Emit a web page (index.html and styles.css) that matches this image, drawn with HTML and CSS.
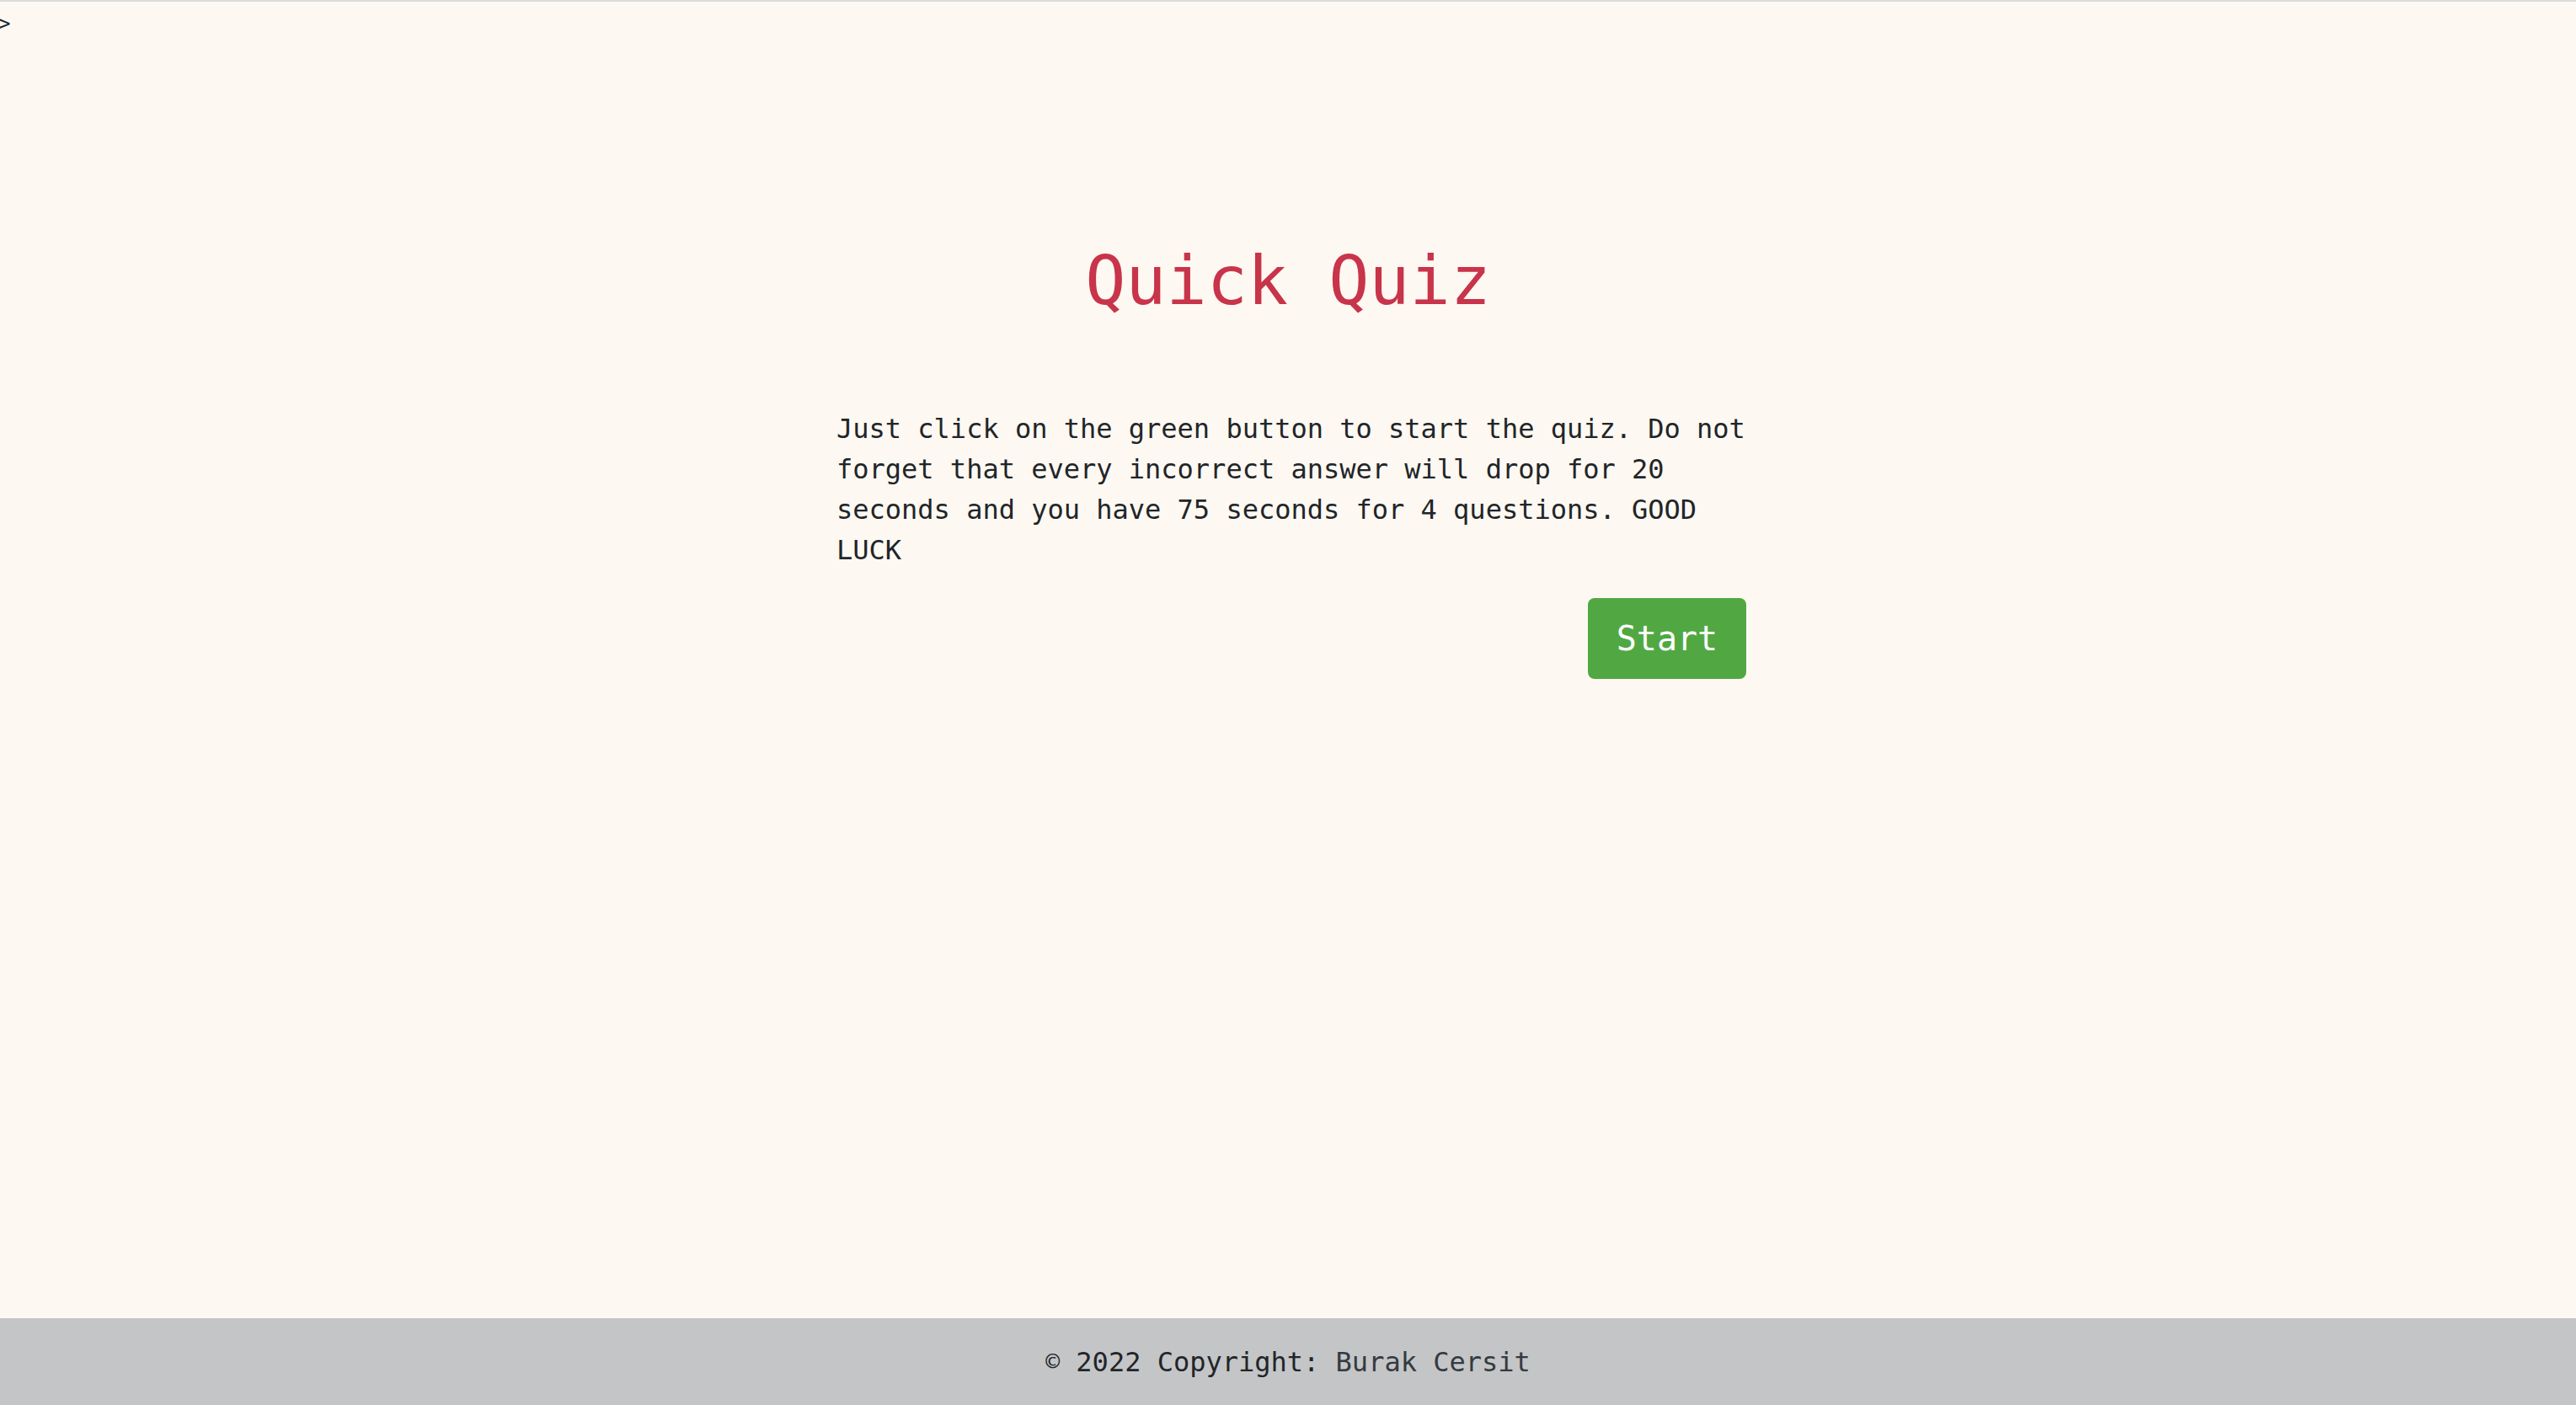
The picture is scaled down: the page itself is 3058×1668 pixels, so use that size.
FILE: index.html
```html
<!DOCTYPE html>
<html lang="en">
<head>
<meta charset="utf-8">
<title>Quick Quiz</title>
<link rel="stylesheet" href="styles.css">
</head>
<body>
<div class="page">
  <div class="stray">&gt;</div>
  <main class="quiz">
    <h1 class="title">Quick Quiz</h1>
    <p class="intro">Just click on the green button to start the quiz. Do not forget that every incorrect answer will drop for 20 seconds and you have 75 seconds for 4 questions. GOOD LUCK</p>
    <div class="actions">
      <button class="start-btn" type="button">Start</button>
    </div>
  </main>
  <footer class="footer">
    <span class="copy">©</span> 2022 Copyright: <a class="author" href="#">Burak Cersit</a>
  </footer>
</div>
</body>
</html>
```
FILE: styles.css
```css
html, body {
  margin: 0;
  padding: 0;
  height: 100%;
}
body {
  background: #fdf8f1;
  color: #212529;
  font-family: "DejaVu Sans Mono", monospace;
  font-size: 32px;
  line-height: 1.5;
  border-top: 2px solid #dcdcdc;
  box-sizing: border-box;
}
.page {
  min-height: 100%;
  display: flex;
  flex-direction: column;
}
.stray {
  font-size: 24px;
  line-height: 52px;
  height: 52px;
  margin-left: -2px;
}
.quiz {
  flex: 1;
  width: 1088px;
  margin: 0 auto;
  display: flex;
  flex-direction: column;
}
.title {
  margin: 232px 0 0;
  text-align: center;
  font-size: 80px;
  font-weight: 400;
  line-height: 1.2;
  color: #c8344a;
}
.intro {
  margin: 103px 0 0;
  padding: 0 0 0 8px;
}
.actions {
  display: flex;
  justify-content: flex-end;
  margin-top: 33px;
}
.start-btn {
  width: 188px;
  height: 96px;
  border: none;
  border-radius: 8px;
  background: #51a843;
  color: #fff;
  font-family: "DejaVu Sans Mono", monospace;
  font-size: 40px;
  cursor: pointer;
}
.footer {
  background: #c4c5c7;
  height: 103px;
  display: flex;
  align-items: center;
  justify-content: center;
  color: #212529;
  white-space: pre;
}
.copy {
  font-size: 28px;
}
.author {
  color: #343a40;
  text-decoration: none;
}
```
